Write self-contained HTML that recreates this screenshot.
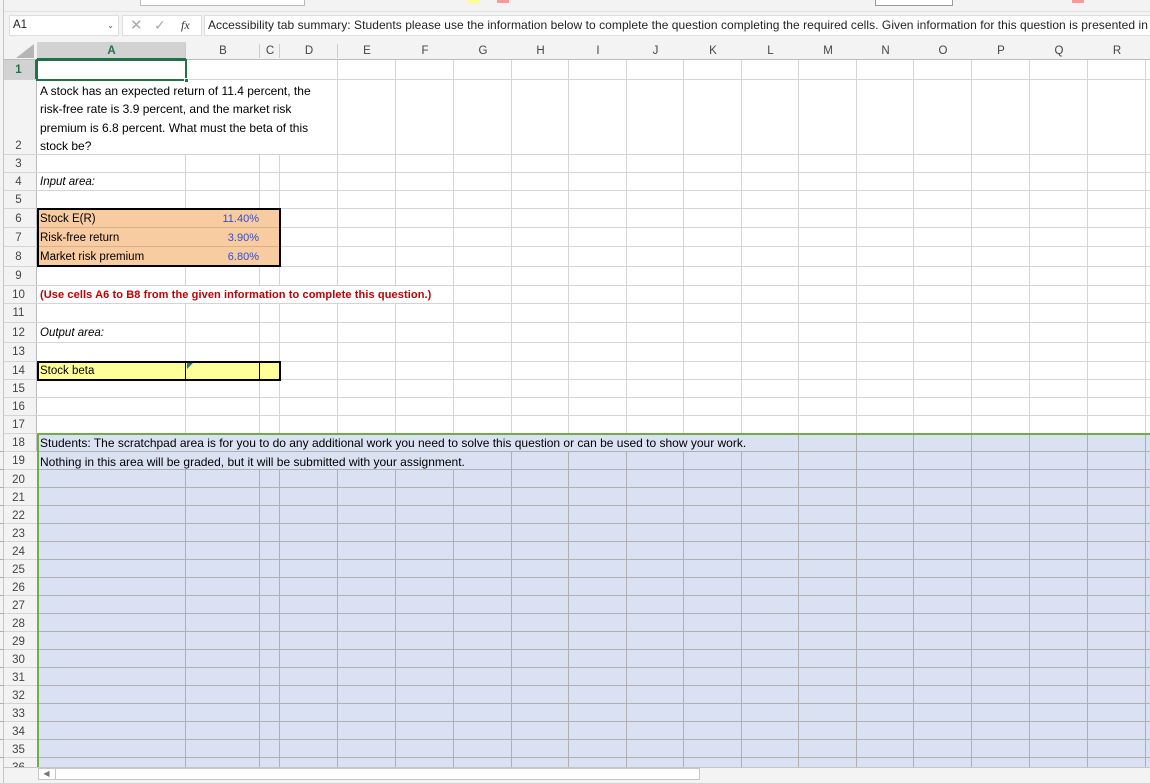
<!DOCTYPE html>
<html><head><meta charset="utf-8"><style>
*{margin:0;padding:0;box-sizing:border-box}
body{width:1150px;height:783px;overflow:hidden;background:#fff;font-family:"Liberation Sans",Arial,sans-serif;position:relative;color:#000}
.a{position:absolute}
.v{position:absolute;width:1px;background:#d4d4d4}
.h{position:absolute;height:1px;background:#d4d4d4}
.rh{position:absolute;left:0;width:37px;text-align:center;font-size:11.5px;color:#444}
.ch{position:absolute;top:42px;height:18px;line-height:18px;text-align:center;font-size:11.5px;color:#444}
.t{position:absolute;font-size:11.5px;white-space:nowrap;line-height:18px}
</style></head><body>
<div class="a" style="left:0;top:0;width:1150px;height:12px;background:#f3f3f3;border-bottom:1px solid #e1e1e1"></div>
<div class="a" style="left:140px;top:0;width:165px;height:6px;border:1px solid #bbb;border-top:none;background:#fff"></div>
<div class="a" style="left:875px;top:0;width:78px;height:6px;border:1px solid #999;border-top:none;background:#fff"></div>
<div class="a" style="left:468px;top:0;width:12px;height:3px;background:#ffff88"></div>
<div class="a" style="left:497px;top:0;width:12px;height:3px;background:#f99"></div>
<div class="a" style="left:1072px;top:0;width:12px;height:3px;background:#f99"></div>
<div class="a" style="left:0;top:12px;width:1150px;height:30px;background:#f3f3f3"></div>
<div class="a" style="left:0;top:0;width:4px;height:783px;background:#f3f3f3;border-right:1px solid #c6c6c6"></div>
<div class="a" style="left:9px;top:15px;width:110px;height:21px;background:#fff;border:1px solid #ddd;font-size:11.5px;line-height:19px;padding-left:3px;color:#222">A1<span style="position:absolute;right:4px;top:0;font-size:8px;color:#555">&#8964;</span></div>
<div class="a" style="left:122px;top:15px;width:80px;height:21px;background:#fff;border:1px solid #ddd"></div>
<div class="a" style="left:130px;top:15px;font-size:15px;color:#aaa;line-height:21px">&#10005;</div>
<div class="a" style="left:154px;top:15px;font-size:14px;color:#aaa;line-height:21px">&#10003;</div>
<div class="a" style="left:181px;top:15px;font-size:12px;color:#333;line-height:21px;font-family:'Liberation Serif',serif;font-style:italic">fx</div>
<div class="a" style="left:204px;top:15px;width:950px;height:21px;background:#fff;border:1px solid #ddd;font-size:12px;line-height:19px;padding-left:3px;white-space:nowrap;color:#222;overflow:hidden;letter-spacing:0.05px">Accessibility tab summary: Students please use the information below to complete the question completing the required cells. Given information for this question is presented in</div>
<div class="a" style="left:4px;top:42px;width:1146px;height:18px;background:#f3f3f3;border-bottom:1px solid #bdbdbd"></div>
<div class="a" style="left:37px;top:42px;width:149px;height:18px;background:#d2d2d2;border-bottom:2px solid #217346"></div>
<div class="a" style="left:16px;top:44px;width:0;height:0;border-left:18px solid transparent;border-bottom:14px solid #b5b5b5"></div>
<div class="ch" style="left:37px;width:149px;color:#217346;font-weight:bold">A</div>
<div class="ch" style="left:186px;width:74px">B</div>
<div class="ch" style="left:260px;width:20px">C</div>
<div class="ch" style="left:280px;width:58px">D</div>
<div class="ch" style="left:338px;width:58px">E</div>
<div class="ch" style="left:396px;width:58px">F</div>
<div class="ch" style="left:454px;width:58px">G</div>
<div class="ch" style="left:512px;width:57px">H</div>
<div class="ch" style="left:569px;width:58px">I</div>
<div class="ch" style="left:627px;width:57px">J</div>
<div class="ch" style="left:684px;width:58px">K</div>
<div class="ch" style="left:742px;width:57px">L</div>
<div class="ch" style="left:799px;width:58px">M</div>
<div class="ch" style="left:857px;width:57px">N</div>
<div class="ch" style="left:914px;width:58px">O</div>
<div class="ch" style="left:972px;width:58px">P</div>
<div class="ch" style="left:1030px;width:58px">Q</div>
<div class="ch" style="left:1088px;width:58px">R</div>
<div class="a" style="left:185px;top:44px;width:1px;height:14px;background:#ccc"></div>
<div class="a" style="left:259px;top:44px;width:1px;height:14px;background:#ccc"></div>
<div class="a" style="left:279px;top:44px;width:1px;height:14px;background:#ccc"></div>
<div class="a" style="left:337px;top:44px;width:1px;height:14px;background:#ccc"></div>
<div class="a" style="left:4px;top:60px;width:33px;height:707px;background:#f3f3f3;border-right:1px solid #bdbdbd"></div>
<div class="a" style="left:4px;top:60px;width:33px;height:20px;background:#d2d2d2;border-right:2px solid #217346"></div>
<div class="a" style="left:37px;top:434px;width:1113px;height:333px;background:#d9e1f2"></div>
<div class="v" style="left:185px;top:60px;height:374px"></div>
<div class="v" style="left:259px;top:60px;height:374px"></div>
<div class="v" style="left:279px;top:60px;height:374px"></div>
<div class="v" style="left:337px;top:60px;height:374px"></div>
<div class="v" style="left:395px;top:60px;height:374px"></div>
<div class="v" style="left:453px;top:60px;height:374px"></div>
<div class="v" style="left:511px;top:60px;height:374px"></div>
<div class="v" style="left:568px;top:60px;height:374px"></div>
<div class="v" style="left:626px;top:60px;height:374px"></div>
<div class="v" style="left:683px;top:60px;height:374px"></div>
<div class="v" style="left:741px;top:60px;height:374px"></div>
<div class="v" style="left:798px;top:60px;height:374px"></div>
<div class="v" style="left:856px;top:60px;height:374px"></div>
<div class="v" style="left:913px;top:60px;height:374px"></div>
<div class="v" style="left:971px;top:60px;height:374px"></div>
<div class="v" style="left:1029px;top:60px;height:374px"></div>
<div class="v" style="left:1087px;top:60px;height:374px"></div>
<div class="v" style="left:1145px;top:60px;height:374px"></div>
<div style="position:absolute;left:0;top:434px;width:1150px;height:333px">
<div class="v" style="left:185px;top:0;height:333px;background:#b0b0b0"></div>
<div class="v" style="left:259px;top:0;height:333px;background:#b0b0b0"></div>
<div class="v" style="left:279px;top:0;height:333px;background:#b0b0b0"></div>
<div class="v" style="left:337px;top:0;height:333px;background:#b0b0b0"></div>
<div class="v" style="left:395px;top:0;height:333px;background:#b0b0b0"></div>
<div class="v" style="left:453px;top:0;height:333px;background:#b0b0b0"></div>
<div class="v" style="left:511px;top:0;height:333px;background:#b0b0b0"></div>
<div class="v" style="left:568px;top:0;height:333px;background:#b0b0b0"></div>
<div class="v" style="left:626px;top:0;height:333px;background:#b0b0b0"></div>
<div class="v" style="left:683px;top:0;height:333px;background:#b0b0b0"></div>
<div class="v" style="left:741px;top:0;height:333px;background:#b0b0b0"></div>
<div class="v" style="left:798px;top:0;height:333px;background:#b0b0b0"></div>
<div class="v" style="left:856px;top:0;height:333px;background:#b0b0b0"></div>
<div class="v" style="left:913px;top:0;height:333px;background:#b0b0b0"></div>
<div class="v" style="left:971px;top:0;height:333px;background:#b0b0b0"></div>
<div class="v" style="left:1029px;top:0;height:333px;background:#b0b0b0"></div>
<div class="v" style="left:1087px;top:0;height:333px;background:#b0b0b0"></div>
<div class="v" style="left:1145px;top:0;height:333px;background:#b0b0b0"></div>
</div>
<div class="h" style="left:4px;top:79px;width:1146px"></div>
<div class="h" style="left:4px;top:154px;width:1146px"></div>
<div class="h" style="left:4px;top:172px;width:1146px"></div>
<div class="h" style="left:4px;top:190px;width:1146px"></div>
<div class="h" style="left:4px;top:208px;width:1146px"></div>
<div class="h" style="left:4px;top:227px;width:1146px"></div>
<div class="h" style="left:4px;top:246px;width:1146px"></div>
<div class="h" style="left:4px;top:266px;width:1146px"></div>
<div class="h" style="left:4px;top:285px;width:1146px"></div>
<div class="h" style="left:4px;top:303px;width:1146px"></div>
<div class="h" style="left:4px;top:322px;width:1146px"></div>
<div class="h" style="left:4px;top:342px;width:1146px"></div>
<div class="h" style="left:4px;top:361px;width:1146px"></div>
<div class="h" style="left:4px;top:379px;width:1146px"></div>
<div class="h" style="left:4px;top:397px;width:1146px"></div>
<div class="h" style="left:4px;top:415px;width:1146px"></div>
<div class="h" style="left:4px;top:433px;width:1146px"></div>
<div style="position:absolute;left:0;top:451px;width:1150px;height:316px;background:repeating-linear-gradient(to bottom,#b0b0b0 0,#b0b0b0 1px,transparent 1px,transparent 18px)"></div>
<div style="position:absolute;left:4px;top:451px;width:33px;height:316px;background:repeating-linear-gradient(to bottom,#d4d4d4 0,#d4d4d4 1px,#f3f3f3 1px,#f3f3f3 18px)"></div>
<div class="a" style="left:185px;top:60px;width:152px;height:19px;background:#fff"></div>
<div class="a" style="left:185px;top:80px;width:152px;height:74px;background:#fff"></div>
<div class="a" style="left:185px;top:286px;width:250px;height:17px;background:#fff"></div>
<div class="a" style="left:185px;top:435px;width:567px;height:16px;background:#d9e1f2"></div>
<div class="a" style="left:185px;top:452px;width:293px;height:17px;background:#d9e1f2"></div>
<div class="a" style="left:37px;top:433px;width:1113px;height:2px;background:#70ad47"></div>
<div class="a" style="left:37px;top:433px;width:2px;height:334px;background:#70ad47"></div>
<div class="a" style="left:36px;top:59px;width:151px;height:22px;border:2px solid #217346"></div>
<div class="a" style="left:184px;top:78px;width:5px;height:5px;background:#217346;border:1px solid #fff"></div>
<div class="a" style="left:37px;top:208px;width:244px;height:59px;background:#f8cba0;border:2px solid #000"></div>
<div class="a" style="left:39px;top:227px;width:240px;height:1px;background:#d9b08c"></div>
<div class="a" style="left:39px;top:246px;width:240px;height:1px;background:#d9b08c"></div>
<div class="a" style="left:37px;top:361px;width:244px;height:20px;background:#ffff99;border:2px solid #000"></div>
<div class="a" style="left:185px;top:362px;width:1px;height:18px;background:#000"></div>
<div class="a" style="left:259px;top:362px;width:1px;height:18px;background:#000"></div>
<div class="a" style="left:187px;top:363px;width:0;height:0;border-top:6px solid #1f7a8c;border-right:6px solid transparent"></div>
<div class="rh" style="top:60px;height:20px;line-height:20px;color:#217346;font-weight:bold">1</div>
<div class="rh" style="top:137px;line-height:18px">2</div>
<div class="rh" style="top:155px;line-height:18px">3</div>
<div class="rh" style="top:173px;line-height:18px">4</div>
<div class="rh" style="top:191px;line-height:18px">5</div>
<div class="rh" style="top:210px;line-height:18px">6</div>
<div class="rh" style="top:229px;line-height:18px">7</div>
<div class="rh" style="top:248px;line-height:18px">8</div>
<div class="rh" style="top:267px;line-height:18px">9</div>
<div class="rh" style="top:286px;line-height:18px">10</div>
<div class="rh" style="top:304px;line-height:18px">11</div>
<div class="rh" style="top:324px;line-height:18px">12</div>
<div class="rh" style="top:343px;line-height:18px">13</div>
<div class="rh" style="top:362px;line-height:18px">14</div>
<div class="rh" style="top:380px;line-height:18px">15</div>
<div class="rh" style="top:398px;line-height:18px">16</div>
<div class="rh" style="top:416px;line-height:18px">17</div>
<div class="rh" style="top:434px;line-height:18px">18</div>
<div class="rh" style="top:452px;line-height:18px">19</div>
<div class="rh" style="top:471px;line-height:18px">20</div>
<div class="rh" style="top:489px;line-height:18px">21</div>
<div class="rh" style="top:507px;line-height:18px">22</div>
<div class="rh" style="top:525px;line-height:18px">23</div>
<div class="rh" style="top:543px;line-height:18px">24</div>
<div class="rh" style="top:561px;line-height:18px">25</div>
<div class="rh" style="top:579px;line-height:18px">26</div>
<div class="rh" style="top:597px;line-height:18px">27</div>
<div class="rh" style="top:615px;line-height:18px">28</div>
<div class="rh" style="top:633px;line-height:18px">29</div>
<div class="rh" style="top:651px;line-height:18px">30</div>
<div class="rh" style="top:669px;line-height:18px">31</div>
<div class="rh" style="top:687px;line-height:18px">32</div>
<div class="rh" style="top:705px;line-height:18px">33</div>
<div class="rh" style="top:723px;line-height:18px">34</div>
<div class="rh" style="top:741px;line-height:18px">35</div>
<div class="rh" style="top:759px;line-height:18px;height:8px;overflow:hidden">36</div>
<div class="t" style="left:40px;top:82px;font-size:12px;line-height:18.3px;white-space:nowrap">A stock has an expected return of 11.4 percent, the<br>risk-free rate is 3.9 percent, and the market risk<br>premium is 6.8 percent. What must the beta of this<br>stock be?</div>
<div class="t" style="left:40px;top:173px;font-style:italic;font-size:11.5px">Input area:</div>
<div class="t" style="left:40px;top:210px;font-size:11.5px">Stock E(R)</div>
<div class="t" style="left:40px;top:229px;font-size:11.5px">Risk-free return</div>
<div class="t" style="left:40px;top:248px;font-size:11.5px">Market risk premium</div>
<div class="t" style="left:186px;width:73px;text-align:right;top:210px;font-size:11px;color:#3050d0">11.40%</div>
<div class="t" style="left:186px;width:73px;text-align:right;top:229px;font-size:11px;color:#3050d0">3.90%</div>
<div class="t" style="left:186px;width:73px;text-align:right;top:248px;font-size:11px;color:#3050d0">6.80%</div>
<div class="t" style="left:40px;top:286px;font-size:11px;font-weight:bold;color:#c00000;letter-spacing:0.1px">(Use cells A6 to B8 from the given information to complete this question.)</div>
<div class="t" style="left:40px;top:324px;font-style:italic;font-size:11.5px">Output area:</div>
<div class="t" style="left:40px;top:362px;font-size:11.5px">Stock beta</div>
<div class="t" style="left:40px;top:434px;font-size:12px">Students: The scratchpad area is for you to do any additional work you need to solve this question or can be used to show your work.</div>
<div class="t" style="left:40px;top:453px;font-size:12px">Nothing in this area will be graded, but it will be submitted with your assignment.</div>
<div class="a" style="left:4px;top:767px;width:1146px;height:16px;background:#f3f3f3;border-top:1px solid #c6c6c6"></div>
<div class="a" style="left:38px;top:768px;width:662px;height:12px;background:#fff;border:1px solid #c6c6c6"></div>
<div class="a" style="left:38px;top:768px;width:18px;height:12px;border-right:1px solid #c6c6c6;font-size:8px;line-height:11px;text-align:center;color:#777">&#9664;</div>
</body></html>
